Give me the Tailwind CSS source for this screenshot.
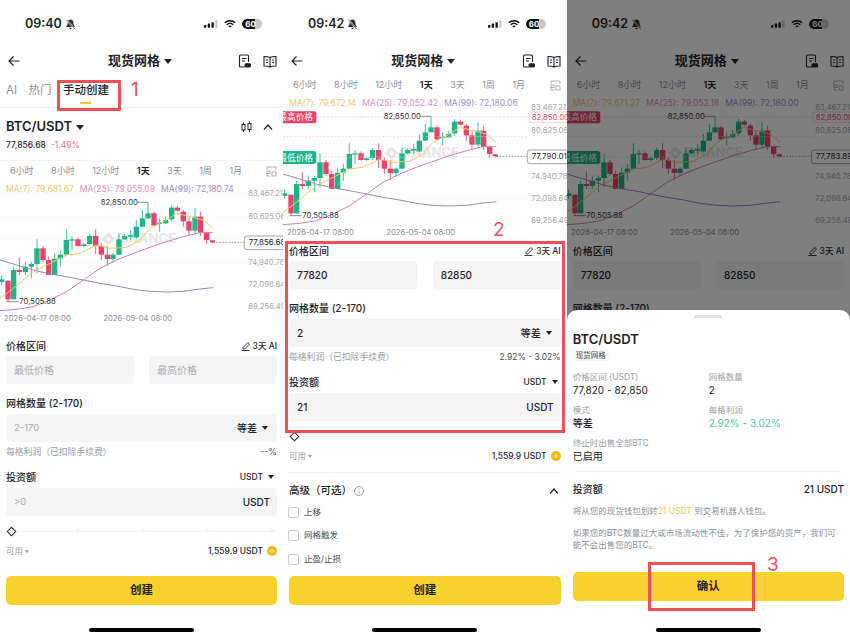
<!DOCTYPE html>
<html lang="zh-CN">
<head>
    <meta charset="UTF-8">
    <meta name="viewport" content="width=device-width, initial-scale=1.0">
    <title>现货网格</title>
    <script src="https://cdn.jsdelivr.net/npm/@tailwindcss/browser@4"></script>
</head>
<body class="bg-white">
    <div class="relative flex w-[850px] h-[637px] overflow-hidden bg-white text-[#1e2329] font-['Inter','Noto_Sans_CJK_SC',sans-serif]">

        <!-- Shared status bar + nav -->
        <template id="top-bar">
            <div class="flex items-center h-[48px] pl-[25px] pr-[21px]">
                <span class="time text-[12.500px] font-semibold leading-none"></span>
                <svg class="ml-[3px] w-[11px] h-[11px]" viewBox="0 0 10 10"><path d="M5 .5C3.300.5 2.400 1.900 2.400 3.500c0 2-1 2.900-1.400 3.700h8C8.600 6.400 7.600 5.500 7.600 3.500 7.600 1.900 6.700.5 5 .5zM3.900 8h2.200c0 .7-.4 1.300-1.100 1.300S3.900 8.700 3.900 8z" fill="#2b2f36"/><path d="M1.200.6l7.800 8.800" stroke="#fff" stroke-width="1.300"/><path d="M1.200.6l7.800 8.800" stroke="#2b2f36" stroke-width=".7"/></svg>
                <svg class="ml-auto w-[14px] h-[10px]" viewBox="0 0 15 10"><rect x="0" y="6" width="2.500" height="3" rx=".5" fill="#111"/><rect x="4" y="4.500" width="2.500" height="4.500" rx=".5" fill="#111"/><rect x="8" y="3" width="2.500" height="6" rx=".5" fill="#111"/><rect x="12" y="1" width="2.500" height="8" rx=".5" fill="#c9c9c9"/></svg>
                <svg class="ml-[6px] w-[12px] h-[10px]" viewBox="0 0 13 10" fill="none" stroke="#111" stroke-width="1.700"><path d="M1 3.700C4 .8 9 .8 12 3.700"/><path d="M3 5.800c2-1.800 5-1.800 7 0"/><path d="M5.200 7.900c.8-.6 1.800-.6 2.600 0"/></svg>
                <span class="relative ml-[6px] flex items-center justify-center w-[20px] h-[10px] rounded-full bg-[#c8c8c8] overflow-hidden">
                    <span class="absolute left-0 top-0 bottom-0 w-[13px] bg-[#111] rounded-l-full"></span>
                    <span class="relative text-[8px] font-bold text-white leading-none -ml-[3px]">60</span>
                </span>
            </div>
            <div class="flex items-center h-[26px] pl-[8px] pr-[6px]">
                <svg class="w-[12px] h-[12px]" viewBox="0 0 12 12" fill="none" stroke="#1e2329" stroke-width="1.200"><path d="M11.500 6H1M5.500 1.500L1 6l4.500 4.500"/></svg>
                <div class="flex items-center justify-center flex-1 pl-[22px]">
                    <span class="text-[13px] font-semibold">现货网格</span>
                    <span class="ml-[4px] w-0 h-0 border-x-[4px] border-x-transparent border-t-[5px] border-t-[#1e2329]"></span>
                </div>
                <svg class="w-[13px] h-[14px]" viewBox="0 0 13 14" fill="none" stroke="#1e2329" stroke-width="1.100"><path d="M7 13H2.500a1 1 0 0 1-1-1V2a1 1 0 0 1 1-1h7a1 1 0 0 1 1 1v6"/><path d="M4 4.500h4.500M4 7h3"/><rect x="7" y="9.800" width="5.500" height="3.200" rx="1.200" fill="#1e2329"/></svg>
                <svg class="ml-[12px] w-[14px] h-[13px]" viewBox="0 0 14 13" fill="none" stroke="#1e2329" stroke-width="1.100"><path d="M7 2.500C5.500 1.600 3 1.500 1 1.500v9.500c2 0 4.500.1 6 1 1.500-.9 4-1 6-1V1.500c-2 0-4.500.1-6 1zM7 2.500V12"/><path d="M3 5h2M3 7.500h2M9 5h2M9 7.500h2"/></svg>
            </div>
        </template>

        <!-- Shared timeframe row -->
        <template id="timeframes">
            <div class="flex items-center h-[22px] pl-[10px] pr-[6px] gap-[17.500px] text-[9px] text-[#8b8f96]">
                <span>6小时</span><span>8小时</span><span>12小时</span><span class="font-semibold text-[#1e2329]">1天</span><span>3天</span><span>1周</span><span>1月</span>
                <svg class="ml-auto w-[11px] h-[11px]" viewBox="0 0 11 11" fill="none" stroke="#9aa0a6" stroke-width=".8"><path d="M1 4V1h9v3M1 7v3h3"/><rect x="1" y="5" width="3" height="2.500"/><rect x="6" y="6" width="4" height="4"/></svg>
            </div>
        </template>

        <!-- Shared available balance row -->
        <template id="balance">
            <div class="flex items-center mt-[8px] h-[12px] px-[6px] text-[8.500px]">
                <span class="text-[#9a9ea5]">可用</span>
                <span class="ml-[2px] w-0 h-0 border-x-[2.500px] border-x-transparent border-t-[3px] border-t-[#9a9ea5]"></span>
                <span class="ml-auto font-medium">1,559.9 USDT</span>
                <svg class="ml-[4px] w-[10px] h-[10px]" viewBox="0 0 10 10"><circle cx="5" cy="5" r="5" fill="#f0b90b"/><path d="M5 2.500v5M2.500 5h5" stroke="#fbe9a8" stroke-width="1.200"/></svg>
            </div>
        </template>

        <!-- Panel 1 -->
        <section class="flex flex-col w-[283px] h-full shrink-0 overflow-hidden">
            <div data-top="09:40"></div>
            <div class="flex items-center gap-[11.500px] h-[34px] px-[6px] border-b border-[#f5f5f5] text-[11.500px] text-[#8b8f96]">
                <span>AI</span>
                <span>热门</span>
                <span class="relative font-medium text-[#1e2329]">手动创建
                    <span class="absolute left-[17px] -bottom-[5px] w-[11px] h-[2px] bg-[#f0c92e]"></span>
                </span>
            </div>
            <div class="flex items-center mt-[10px] h-[18px] px-[6px]">
                <span class="text-[13px] font-semibold">BTC/USDT</span>
                <span class="ml-[4px] w-0 h-0 border-x-[4px] border-x-transparent border-t-[5px] border-t-[#1e2329]"></span>
                <svg class="ml-auto w-[11px] h-[12px]" viewBox="0 0 11 12" fill="none" stroke="#1e2329" stroke-width="1"><rect x="1" y="3.500" width="3" height="5.500"/><rect x="7" y="2.500" width="3" height="6"/><path d="M2.500 1.500v2M2.500 9v2M8.500 .5v2M8.500 8.500V11"/></svg>
                <svg class="ml-[11px] mr-[4px] w-[10px] h-[6px]" viewBox="0 0 10 6" fill="none" stroke="#1e2329" stroke-width="1.200"><path d="M1 5.500L5 1l4 4.500"/></svg>
            </div>
            <div class="flex items-center gap-[5px] mt-[2px] h-[14px] px-[6px] text-[8.500px]">
                <span class="font-medium">77,856.68</span>
                <span class="text-[#e0708a]">-1.49%</span>
            </div>
            <div class="mt-[8px] border-t border-[#f5f5f5]"></div>
            <div data-timeframes class="-mt-px"></div>
            <div class="flex items-center gap-[6px] h-[14px] px-[6px] text-[8.500px]">
                <span class="text-[#e8cb72]">MA(7): 79,681.67</span>
                <span class="text-[#d88fc4]">MA(25): 79,055.09</span>
                <span class="text-[#9d8fc6]">MA(99): 72,180.74</span>
            </div>
            <div data-chart="1" data-last="77,856.68"></div>

            <div class="flex items-center justify-between mt-[13px] h-[14px] px-[6px]">
                <span class="text-[10px] font-medium">价格区间</span>
                <span class="flex items-center gap-[2px] text-[8.500px] font-medium">
                    <svg class="w-[10px] h-[10px]" viewBox="0 0 10 10" fill="none" stroke="#1e2329" stroke-width=".9"><path d="M2 6.500L6.800 1.500l1.700 1.600L3.700 8H2zM.5 9.500h8"/></svg>3天 AI
                </span>
            </div>
            <div class="flex justify-between mt-[3px] px-[6px]">
                <div class="flex items-center w-[128px] h-[28px] pl-[8px] rounded-[4px] bg-[#f5f5f5] text-[10px] text-[#a9adb3]">最低价格</div>
                <div class="flex items-center w-[128px] h-[28px] pl-[8px] rounded-[4px] bg-[#f5f5f5] text-[10px] text-[#a9adb3]">最高价格</div>
            </div>
            <div class="flex items-center mt-[12px] h-[14px] px-[6px] text-[10px] font-medium">网格数量 (2-170)</div>
            <div class="flex items-center mt-[4px] mx-[6px] h-[28px] pl-[8px] pr-[9px] rounded-[4px] bg-[#f5f5f5] text-[9.500px] text-[#a9adb3]">
                <span>2-170</span>
                <span class="ml-auto text-[10px] font-medium text-[#1e2329]">等差</span>
                <span class="ml-[5px] w-0 h-0 border-x-[3px] border-x-transparent border-t-[4px] border-t-[#1e2329]"></span>
            </div>
            <div class="flex items-center justify-between mt-[4px] h-[12px] px-[6px] text-[8.800px] text-[#9a9ea5]">
                <span>每格利润（已扣除手续费）</span>
                <span class="text-[#474d57]">--%</span>
            </div>
            <div class="flex items-center mt-[12px] h-[14px] px-[6px]">
                <span class="text-[10px] font-medium">投资额</span>
                <span class="ml-auto text-[8.500px] font-medium">USDT</span>
                <span class="ml-[5px] mr-[3px] w-0 h-0 border-x-[3.500px] border-x-transparent border-t-[4px] border-t-[#1e2329]"></span>
            </div>
            <div class="flex items-center justify-between mt-[4px] mx-[6px] h-[28px] pl-[8px] pr-[7px] rounded-[4px] bg-[#f5f5f5] text-[9.500px] text-[#a9adb3]">
                <span>&gt;0</span>
                <span class="text-[10px] font-medium text-[#1e2329]">USDT</span>
            </div>
            <div class="relative flex items-center justify-between mt-[9px] h-[12px] mx-[8px] pr-[1px]">
                <span class="absolute left-0 right-0 top-[5.500px] h-px bg-[#f3f3f3]"></span>
                <span class="relative w-[7px] h-[7px] rotate-45 bg-white border border-[#1e2329]"></span>
                <span class="relative w-[4px] h-[4px] rotate-45 bg-[#f3f3f3]"></span>
                <span class="relative w-[4px] h-[4px] rotate-45 bg-[#f3f3f3]"></span>
                <span class="relative w-[4px] h-[4px] rotate-45 bg-[#f3f3f3]"></span>
                <span class="relative w-[4px] h-[4px] rotate-45 bg-[#f3f3f3]"></span>
            </div>
            <div data-balance></div>
            <div class="mt-auto flex items-center justify-center mx-[6px] h-[29px] rounded-[5px] bg-[#f9d22f] text-[11.500px] font-semibold">创建</div>
            <div class="h-[32px] pt-[23px]"><div class="mx-auto w-[105px] h-[3.500px] rounded-full bg-black"></div></div>
        </section>

        <!-- Panel 2 -->
        <section class="flex flex-col w-[283.670px] h-full shrink-0 overflow-hidden">
            <div data-top="09:42"></div>
            <div data-timeframes></div>
            <div class="flex items-center gap-[6px] h-[14px] px-[6px] text-[8.500px]">
                <span class="text-[#e8cb72]">MA(7): 79,672.14</span>
                <span class="text-[#d88fc4]">MA(25): 79,052.42</span>
                <span class="text-[#9d8fc6]">MA(99): 72,180.06</span>
            </div>
            <div data-chart="2" data-last="77,790.01"></div>

            <div class="flex items-center justify-between mt-[4px] h-[14px] px-[6px]">
                <span class="text-[10px] font-medium">价格区间</span>
                <span class="flex items-center gap-[2px] text-[8.500px] font-medium">
                    <svg class="w-[10px] h-[10px]" viewBox="0 0 10 10" fill="none" stroke="#1e2329" stroke-width=".9"><path d="M2 6.500L6.800 1.500l1.700 1.600L3.700 8H2zM.5 9.500h8"/></svg>3天 AI
                </span>
            </div>
            <div class="flex justify-between mt-[3px] px-[6px]">
                <div class="flex items-center w-[128px] h-[28px] pl-[8px] rounded-[4px] bg-[#f5f5f5] text-[10px] font-medium">77820</div>
                <div class="flex items-center w-[128px] h-[28px] pl-[8px] rounded-[4px] bg-[#f5f5f5] text-[10px] font-medium">82850</div>
            </div>
            <div class="flex items-center mt-[12px] h-[14px] px-[6px] text-[10px] font-medium">网格数量 (2-170)</div>
            <div class="flex items-center mt-[4px] mx-[6px] h-[28px] pl-[8px] pr-[9px] rounded-[4px] bg-[#f5f5f5] text-[10px] font-medium">
                <span>2</span>
                <span class="ml-auto">等差</span>
                <span class="ml-[5px] w-0 h-0 border-x-[3px] border-x-transparent border-t-[4px] border-t-[#1e2329]"></span>
            </div>
            <div class="flex items-center justify-between mt-[4px] h-[12px] px-[6px] text-[8.800px] text-[#9a9ea5]">
                <span>每格利润（已扣除手续费）</span>
                <span class="text-[8.500px] text-[#474d57]">2.92% - 3.02%</span>
            </div>
            <div class="flex items-center mt-[12px] h-[14px] px-[6px]">
                <span class="text-[10px] font-medium">投资额</span>
                <span class="ml-auto text-[8.500px] font-medium">USDT</span>
                <span class="ml-[5px] mr-[3px] w-0 h-0 border-x-[3.500px] border-x-transparent border-t-[4px] border-t-[#1e2329]"></span>
            </div>
            <div class="flex items-center justify-between mt-[4px] mx-[6px] h-[28px] pl-[8px] pr-[7px] rounded-[4px] bg-[#f5f5f5] text-[10px] font-medium">
                <span>21</span>
                <span>USDT</span>
            </div>
            <div class="relative flex items-center mt-[9px] h-[12px] mx-[8px]">
                <span class="relative w-[7px] h-[7px] rotate-45 bg-white border border-[#1e2329]"></span>
            </div>
            <div data-balance></div>
            <div class="mt-[10px] mx-[6px] border-t border-[#f5f5f5]"></div>
            <div class="flex items-center mt-[11px] h-[14px] pl-[6px] pr-[8px]">
                <span class="text-[10.500px] font-medium">高级（可选）</span>
                <span class="ml-[2px] flex items-center justify-center w-[10px] h-[10px] rounded-full border border-[#9a9ea5] text-[7px] leading-none text-[#9a9ea5]">i</span>
                <svg class="ml-auto w-[10px] h-[6px]" viewBox="0 0 10 6" fill="none" stroke="#1e2329" stroke-width="1.200"><path d="M1 5.500L5 1l4 4.500"/></svg>
            </div>
            <div class="flex items-center gap-[5px] mt-[8px] h-[12px] px-[5px] text-[8.500px] text-[#474d57]">
                <span class="w-[11px] h-[11px] rounded-[2px] border border-[#c9ccd1]"></span>上移
            </div>
            <div class="flex items-center gap-[5px] mt-[11px] h-[12px] px-[5px] text-[8.500px] text-[#474d57]">
                <span class="w-[11px] h-[11px] rounded-[2px] border border-[#c9ccd1]"></span>网格触发
            </div>
            <div class="flex items-center gap-[5px] mt-[12px] h-[12px] px-[5px] text-[8.500px] text-[#474d57]">
                <span class="w-[11px] h-[11px] rounded-[2px] border border-[#c9ccd1]"></span>止盈/止损
            </div>
            <div class="mt-auto flex items-center justify-center mx-[6px] h-[29px] rounded-[5px] bg-[#f9d22f] text-[11.500px] font-semibold">创建</div>
            <div class="h-[32px] pt-[23px]"><div class="mx-auto w-[105px] h-[3.500px] rounded-full bg-black"></div></div>
        </section>

        <!-- Panel 3 -->
        <section class="relative flex flex-col flex-1 h-full overflow-hidden">
            <div data-top="09:42"></div>
            <div data-timeframes></div>
            <div class="flex items-center gap-[6px] h-[14px] px-[6px] text-[8.500px]">
                <span class="text-[#e8cb72]">MA(7): 79,671.27</span>
                <span class="text-[#d88fc4]">MA(25): 79,052.18</span>
                <span class="text-[#9d8fc6]">MA(99): 72,180.00</span>
            </div>
            <div data-chart="2" data-last="77,783.89"></div>
            <div class="flex items-center justify-between mt-[4px] h-[14px] px-[6px]">
                <span class="text-[10px] font-medium">价格区间</span>
                <span class="flex items-center gap-[2px] text-[8.500px] font-medium">
                    <svg class="w-[10px] h-[10px]" viewBox="0 0 10 10" fill="none" stroke="#1e2329" stroke-width=".9"><path d="M2 6.500L6.800 1.500l1.700 1.600L3.700 8H2zM.5 9.500h8"/></svg>3天 AI
                </span>
            </div>
            <div class="flex justify-between mt-[3px] px-[6px]">
                <div class="flex items-center w-[128px] h-[28px] pl-[8px] rounded-[4px] bg-[#f5f5f5] text-[10px] font-medium">77820</div>
                <div class="flex items-center w-[128px] h-[28px] pl-[8px] rounded-[4px] bg-[#f5f5f5] text-[10px] font-medium">82850</div>
            </div>
            <div class="flex items-center mt-[12px] h-[14px] px-[6px] text-[10px] font-medium">网格数量 (2-170)</div>

            <div class="absolute inset-0 bg-black/50"></div>

            <!-- Bottom sheet -->
            <div class="absolute left-0 right-0 bottom-0 flex flex-col h-[327px] rounded-t-[10px] bg-white">
                <div class="mx-auto mt-[5px] w-[28px] h-[3px] rounded-full bg-[#e0e0e0]"></div>
                <div class="mt-[12px] px-[6px] text-[13px] leading-[18px] font-semibold">BTC/USDT</div>
                <div class="mt-[2px] ml-[6px] self-start px-[3px] h-[11px] flex items-center rounded-[2px] bg-[#f7f7f7] text-[7.500px] text-[#474d57]">现货网格</div>
                <div class="grid grid-cols-[136px_1fr] mt-[10px] px-[6px] gap-y-[7px]">
                    <div>
                        <div class="text-[8.500px] leading-[12px] text-[#9a9ea5]">价格区间 (USDT)</div>
                        <div class="text-[10px] leading-[14px]">77,820 - 82,850</div>
                    </div>
                    <div>
                        <div class="text-[8.500px] leading-[12px] text-[#9a9ea5]">网格数量</div>
                        <div class="text-[10px] leading-[14px]">2</div>
                    </div>
                    <div>
                        <div class="text-[8.500px] leading-[12px] text-[#9a9ea5]">模式</div>
                        <div class="text-[10px] leading-[14px] font-medium">等差</div>
                    </div>
                    <div>
                        <div class="text-[8.500px] leading-[12px] text-[#9a9ea5]">每格利润</div>
                        <div class="text-[10px] leading-[14px] text-[#4fc9a0]">2.92% - 3.02%</div>
                    </div>
                    <div class="col-span-2">
                        <div class="text-[8.500px] leading-[12px] text-[#9a9ea5]">终止时出售全部BTC</div>
                        <div class="text-[10px] leading-[14px]">已启用</div>
                    </div>
                </div>
                <div class="mt-[8px] mx-[8px] border-t border-[#f5f5f5]"></div>
                <div class="flex items-center justify-between mt-[9px] h-[16px] px-[6px] text-[10px] font-medium">
                    <span>投资额</span>
                    <span>21 USDT</span>
                </div>
                <p class="mt-[8px] px-[6px] text-[8.500px] leading-[12px] text-[#8b8f96]">将从您的现货钱包划转<span class="text-[#e8c94f]">21 USDT</span> 到交易机器人钱包。</p>
                <p class="mt-[10px] px-[6px] text-[8.500px] leading-[12px] text-[#8b8f96]">如果您的BTC数量过大或市场流动性不佳，为了保护您的资产，我们可能不会出售您的BTC。</p>
                <div class="mt-auto flex items-center justify-center mx-[6px] h-[29px] rounded-[5px] bg-[#f9d22f] text-[11.500px] font-semibold">确认</div>
                <div class="h-[36px] pt-[27px]"><div class="mx-auto w-[105px] h-[3.500px] rounded-full bg-black"></div></div>
            </div>
        </section>

        <!-- Red annotations drawn over the screenshots -->
        <div class="absolute left-[57px] top-[80px] w-[64px] h-[31px] border-[3px] border-[#ee5058] rounded-[1px]"></div>
        <span class="absolute left-[131px] top-[77px] text-[19px] leading-[26px] text-[#ee5058]">1</span>
        <div class="absolute left-[285px] top-[241px] w-[280px] h-[192px] border-[3px] border-[#ee5058]"></div>
        <span class="absolute left-[493px] top-[217px] text-[19px] leading-[26px] text-[#ee5058]">2</span>
        <div class="absolute left-[648px] top-[562px] w-[107px] h-[49px] border-[3px] border-[#ee5058]"></div>
        <span class="absolute left-[767px] top-[552px] text-[19px] leading-[26px] text-[#ee5058]">3</span>
    </div>

    <script>
        // Fill the repeated status bars, timeframe rows and balance rows
        document.querySelectorAll('[data-top]').forEach(slot => {
            slot.appendChild(document.getElementById('top-bar').content.cloneNode(true));
            slot.querySelector('.time').textContent = slot.dataset.top;
        });
        document.querySelectorAll('[data-timeframes]').forEach(slot => {
            slot.appendChild(document.getElementById('timeframes').content.cloneNode(true));
        });
        document.querySelectorAll('[data-balance]').forEach(slot => {
            slot.appendChild(document.getElementById('balance').content.cloneNode(true));
        });

        // x, body top, body bottom, wick top, wick bottom, red?
        const candles = [
            [5,358,366,345,375,0],[24,362,418,362,425,1],[41,330,418,320,418,0],[58,330,336,292,345,1],
            [76,320,336,305,345,0],[94,312,320,305,355,0],[111,265,312,238,340,0],[129,265,300,258,305,1],
            [146,300,345,290,345,1],[164,296,345,280,345,0],[181,284,296,270,320,0],[199,240,284,208,284,0],
            [216,238,242,228,270,0],[234,238,258,232,260,1],[251,253,258,248,262,0],[269,228,252,222,258,0],
            [287,228,258,208,282,1],[304,258,284,250,300,1],[322,284,297,258,317,1],[339,284,297,280,308,0],
            [357,238,284,222,284,0],[374,228,238,222,240,0],[392,225,230,210,240,0],[409,200,232,180,235,0],
            [427,175,200,150,200,0],[444,160,175,127,175,0],[462,160,196,155,200,1],[479,188,192,175,215,0],
            [497,180,190,170,192,0],[515,143,178,135,185,0],[532,143,152,138,155,1],[550,155,184,150,200,1],
            [567,184,212,170,225,1],[585,170,212,145,222,0],[602,170,218,155,228,1],[620,218,240,215,252,1],
            [637,241,247,240,250,1]
        ];
        const ma7 = '0,415 40,385 100,335 150,310 200,285 240,280 290,255 330,265 380,262 420,240 450,205 500,180 530,160 570,170 610,180 640,205';
        const ma25 = '0,452 50,448 100,440 150,420 200,395 250,360 300,325 350,300 400,280 450,262 500,245 550,230 600,218 640,218';
        const ma99 = '0,300 50,315 100,330 150,342 200,350 250,360 300,370 350,378 400,388 450,394 500,396 550,394 600,387 640,383';
        const axis = [['83,467.21',100],['80,625.06',169],['74,940.78',306],['72,098.64',373],['69,256.49',439]];

        function chartSvg(kind, last) {
            let s = `<svg class="block overflow-visible" width="285" height="130" viewBox="0 108 855 390" font-family="Inter,'Noto Sans CJK SC',sans-serif">`;
            [100,169,237,306,373,439].forEach(y => { s += `<line x1="0" x2="855" y1="${y}" y2="${y}" stroke="#f7f7f7" stroke-width="2"/>`; });
            s += `<path d="M325 217l20 20-20 20-20-20zM325 229l8 8-8 8-8-8z" fill="#e4e6e9" fill-rule="evenodd"/>`;
            s += `<text x="350" y="250" font-size="39" font-weight="700" fill="#e4e6e9">BINANCE</text>`;
            candles.forEach(([x, top, bottom, wickTop, wickBottom, red]) => {
                const color = red ? '#e8436a' : '#1fb586';
                s += `<line x1="${x}" x2="${x}" y1="${wickTop}" y2="${wickBottom}" stroke="${color}" stroke-width="2.500"/>`;
                s += `<rect x="${x - 8}" y="${top}" width="16" height="${bottom - top}" fill="${color}"/>`;
            });
            s += `<polyline points="${ma7}" fill="none" stroke="#eecb6a" stroke-width="3"/>`;
            s += `<polyline points="${ma25}" fill="none" stroke="#d57fb4" stroke-width="3"/>`;
            s += `<polyline points="${ma99}" fill="none" stroke="#9489c0" stroke-width="3"/>`;
            axis.forEach(([label, y]) => { s += `<text x="745" y="${y + 9}" font-size="23" fill="#a3a7ad">${label}</text>`; });
            s += `<text x="302" y="136" font-size="23" fill="#333">82,850.00</text><line x1="412" x2="444" y1="127" y2="127" stroke="#555" stroke-width="2"/>`;
            s += `<text x="58" y="433" font-size="23" fill="#333">70,505.88</text><line x1="20" x2="56" y1="425" y2="425" stroke="#555" stroke-width="2"/>`;
            s += `<text x="12" y="483" font-size="23" fill="#8b8f96">2026-04-17 08:00</text><text x="310" y="483" font-size="23" fill="#8b8f96">2026-05-04 08:00</text>`;
            if (kind === '2') {
                s += `<line x1="0" x2="740" y1="129" y2="129" stroke="#f2b3bf" stroke-width="2" stroke-dasharray="6 5"/>`;
                s += `<line x1="0" x2="740" y1="188" y2="188" stroke="#efc4cc" stroke-width="2" stroke-dasharray="6 5"/>`;
                s += `<line x1="0" x2="640" y1="249" y2="249" stroke="#bcdccf" stroke-width="2" stroke-dasharray="6 5"/>`;
                s += `<rect x="-12" y="112" width="112" height="36" rx="6" fill="#e8436a"/><text x="-14" y="139" font-size="26" fill="#fff">最高价格</text>`;
                s += `<rect x="-12" y="231" width="112" height="39" rx="8" fill="#1fb586"/><text x="-14" y="260" font-size="26" fill="#fff">最低价格</text>`;
                s += `<rect x="738" y="114" width="130" height="31" rx="5" fill="#fff" stroke="#f4b6c2" stroke-width="2"/><text x="746" y="138" font-size="23" fill="#e8436a">82,850.00</text>`;
            }
            s += `<line x1="640" x2="733" y1="247" y2="247" stroke="#666" stroke-width="2" stroke-dasharray="5 4"/>`;
            s += `<rect x="733" y="228" width="140" height="41" rx="8" fill="#fff" stroke="#777" stroke-width="2"/><text x="746" y="256" font-size="24" fill="#1e2329">${last}</text>`;
            return s + '</svg>';
        }

        document.querySelectorAll('[data-chart]').forEach(slot => {
            slot.innerHTML = chartSvg(slot.dataset.chart, slot.dataset.last);
        });
    </script>
</body>
</html>
